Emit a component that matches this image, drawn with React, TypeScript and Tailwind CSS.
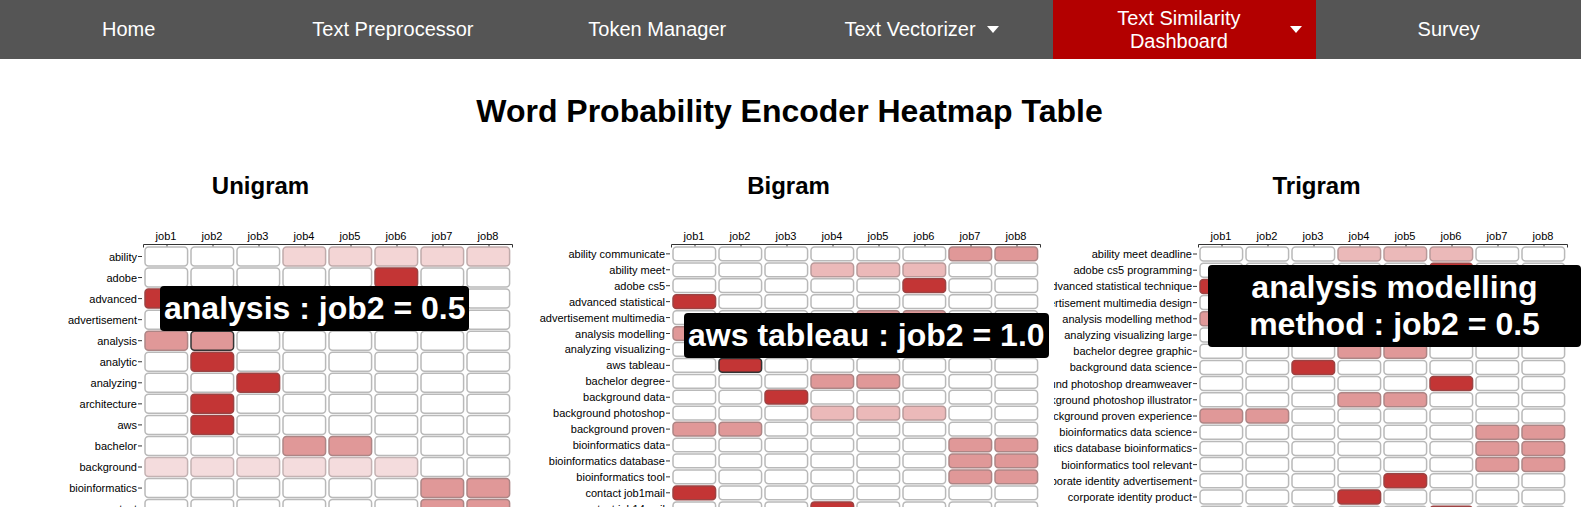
const JOBS = ["job1", "job2", "job3", "job4", "job5", "job6", "job7", "job8"];

// 0 empty, 1-4 pale to mid, 5 full
const FILLS: Record<string, { fill: string; stroke: string }> = {
  "0": { fill: "#ffffff", stroke: "#b9b9b9" },
  "1": { fill: "#f4dcdd", stroke: "#c4b2b3" },
  "2": { fill: "#f3d5d5", stroke: "#c0abab" },
  "3": { fill: "#ebb9b9", stroke: "#b99a9a" },
  "4": { fill: "#e09898", stroke: "#ad8585" },
  "5": { fill: "#c33535", stroke: "#9c4343" },
};

type Row = [string, string, number?];

type ChartProps = {
  title: string;
  titleClass: string;
  axisX: number;
  rowTop: number;
  pitch: number;
  cellH: number;
  rows: Row[];
  children: React.ReactNode;
};

const Heatmap = ({ title, titleClass, axisX, rowTop, pitch, cellH, rows, children }: ChartProps) => {
  return (
    <div className="relative">
      <h3 className={`text-center text-2xl font-bold h-[54px] pt-[2px] leading-[28px] ${titleClass}`}>{title}</h3>
      <div className="relative">
        <svg width="527" height="290" className="block text-[11px]">
          <path d={`M${axisX + 0.5} 23.5V20.5H${axisX + 369.5}V23.5`} fill="none" stroke="#333" />
          {JOBS.map((job, i) => (
            <g key={job}>
              <line x1={axisX + 24 + i * 46} x2={axisX + 24 + i * 46} y1="20.5" y2="24" stroke="#333" />
              <text x={axisX + 23 + i * 46} y="16" textAnchor="middle" fill="#000">
                {job}
              </text>
            </g>
          ))}
          {rows.map(([label, cells, selected], r) => {
            const y = rowTop + r * pitch;
            return (
              <g key={label}>
                <line x1={axisX - 5} x2={axisX - 1} y1={y + cellH / 2} y2={y + cellH / 2} stroke="#333" />
                <text x={axisX - 6} y={y + cellH / 2 + 4} textAnchor="end" fill="#000">
                  {label}
                </text>
                {cells.split("").map((level, c) => (
                  <rect
                    key={c}
                    x={axisX + 2 + c * 46}
                    y={y}
                    width="42.6"
                    height={cellH}
                    rx="3.5"
                    fill={FILLS[level].fill}
                    stroke={selected === c ? "#333333" : FILLS[level].stroke}
                    strokeWidth="1.5"
                  />
                ))}
              </g>
            );
          })}
        </svg>
        {children}
      </div>
    </div>
  );
};

const UNIGRAMS: Row[] = [
  ["ability", "00022222"],
  ["adobe", "00000500"],
  ["advanced", "50000000"],
  ["advertisement", "00004400"],
  ["analysis", "44000000", 1],
  ["analytic", "05000000"],
  ["analyzing", "00500000"],
  ["architecture", "05000000"],
  ["aws", "05000000"],
  ["bachelor", "00044000"],
  ["background", "11111100"],
  ["bioinformatics", "00000044"],
  ["contact", "00000044"],
];

const BIGRAMS: Row[] = [
  ["ability communicate", "00000044"],
  ["ability meet", "00033300"],
  ["adobe cs5", "00000500"],
  ["advanced statistical", "50000000"],
  ["advertisement multimedia", "00004400"],
  ["analysis modelling", "44000000"],
  ["analyzing visualizing", "00000000"],
  ["aws tableau", "05000000", 1],
  ["bachelor degree", "00044000"],
  ["background data", "00500000"],
  ["background photoshop", "00033300"],
  ["background proven", "44000000"],
  ["bioinformatics data", "00000044"],
  ["bioinformatics database", "00000044"],
  ["bioinformatics tool", "00000044"],
  ["contact job1mail", "50000000"],
  ["contact job14mail", "00050000"],
];

const TRIGRAMS: Row[] = [
  ["ability meet deadline", "00033300"],
  ["adobe cs5 programming", "00000500"],
  ["advanced statistical technique", "50000000"],
  ["advertisement multimedia design", "00000000"],
  ["analysis modelling method", "44000000"],
  ["analyzing visualizing large", "00000000"],
  ["bachelor degree graphic", "00044000"],
  ["background data science", "00500000"],
  ["background photoshop dreamweaver", "00000500"],
  ["background photoshop illustrator", "00044000"],
  ["background proven experience", "44000000"],
  ["bioinformatics data science", "00000044"],
  ["bioinformatics database bioinformatics", "00000044"],
  ["bioinformatics tool relevant", "00000044"],
  ["corporate identity advertisement", "00005000"],
  ["corporate identity product", "00050000"],
  ["corporate identity team", "00000500"],
];

const Caret = () => (
  <span className="shrink-0 w-0 h-0 border-x-[6px] border-x-transparent border-t-[7px] border-t-white" />
);

const NAV = [
  { label: "Home", cls: "pr-[6px]" },
  { label: "Text Preprocessor", cls: "pr-[4px]" },
  { label: "Token Manager", cls: "pr-[2px]" },
  { label: "Text Vectorizer", caret: true, cls: "" },
  { label: "Text Similarity Dashboard", caret: true, cls: "bg-[#b30000] pl-[25px] pr-[14px]" },
  { label: "Survey", cls: "" },
];

const tipClass =
  "absolute z-10 bg-black text-white font-bold text-[32px] leading-[37px] text-center rounded-[4px] px-[4px] py-[4px]";

export default function App() {
  return (
    <div className="h-screen overflow-hidden bg-white text-black font-['Liberation_Sans',Arial,sans-serif]">
      <nav className="grid grid-cols-[repeat(5,263.3px)_1fr] h-[59px] bg-[#555555] text-white text-[20px] leading-[23px]">
        {NAV.map((item) => (
          <a key={item.label} className={`flex items-center justify-center text-center gap-[11px] ${item.cls}`}>
            <span>{item.label}</span>
            {item.caret && <Caret />}
          </a>
        ))}
      </nav>

      <h1 className="text-center text-[32px] font-bold leading-[37px] mt-[34px] mb-[40px] pr-[2px]">
        Word Probability Encoder Heatmap Table
      </h1>

      <div className="grid grid-cols-3">
        <Heatmap title="Unigram" titleClass="pr-[6px]" axisX={143} rowTop={23} pitch={21.05} cellH={19} rows={UNIGRAMS}>
          <div className={`${tipClass} left-[160px] top-[62px] whitespace-nowrap`}>analysis : job2 = 0.5</div>
        </Heatmap>
        <Heatmap title="Bigram" titleClass="pr-[4px]" axisX={144} rowTop={23} pitch={15.93} cellH={13.7} rows={BIGRAMS}>
          <div className={`${tipClass} left-[157px] top-[89px] whitespace-nowrap`}>aws tableau : job2 = 1.0</div>
        </Heatmap>
        <Heatmap title="Trigram" titleClass="pr-[2px]" axisX={144} rowTop={23} pitch={16.2} cellH={14} rows={TRIGRAMS}>
          <div className={`${tipClass} left-[154px] right-0 top-[41px]`}>analysis modelling method : job2 = 0.5</div>
        </Heatmap>
      </div>
    </div>
  );
}
